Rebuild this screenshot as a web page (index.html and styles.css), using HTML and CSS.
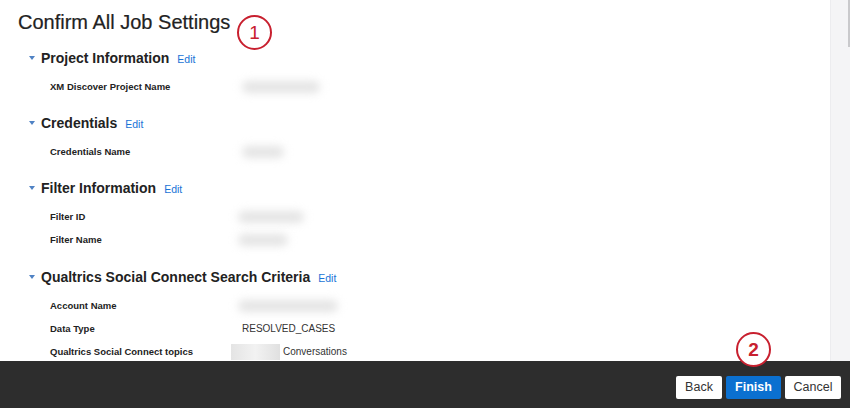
FILE: index.html
```html
<!DOCTYPE html>
<html lang="en">
<head>
    <meta charset="UTF-8">
    <title>Confirm All Job Settings</title>
    <link rel="stylesheet" href="styles.css">
</head>
<body>

    <div class="page">
        <div class="content">
            <h1 class="title">Confirm All Job Settings</h1>

            <div class="section">
                <div class="section-head">
                    <span class="caret"></span>
                    <h2>Project Information</h2>
                    <a href="#" class="edit">Edit</a>
                </div>
                <div class="rows">
                    <div class="row">
                        <span class="label">XM Discover Project Name</span>
                        <span class="blur w80"></span>
                    </div>
                </div>
            </div>

            <div class="section">
                <div class="section-head">
                    <span class="caret"></span>
                    <h2>Credentials</h2>
                    <a href="#" class="edit">Edit</a>
                </div>
                <div class="rows">
                    <div class="row">
                        <span class="label">Credentials Name</span>
                        <span class="blur w45"></span>
                    </div>
                </div>
            </div>

            <div class="section">
                <div class="section-head">
                    <span class="caret"></span>
                    <h2>Filter Information</h2>
                    <a href="#" class="edit">Edit</a>
                </div>
                <div class="rows">
                    <div class="row">
                        <span class="label">Filter ID</span>
                        <span class="blur w68 shift"></span>
                    </div>
                    <div class="row">
                        <span class="label">Filter Name</span>
                        <span class="blur w52 shift"></span>
                    </div>
                </div>
            </div>

            <div class="section last">
                <div class="section-head">
                    <span class="caret"></span>
                    <h2>Qualtrics Social Connect Search Criteria</h2>
                    <a href="#" class="edit">Edit</a>
                </div>
                <div class="rows">
                    <div class="row">
                        <span class="label">Account Name</span>
                        <span class="blur w100 shift"></span>
                    </div>
                    <div class="row">
                        <span class="label">Data Type</span>
                        <span class="value indent">RESOLVED_CASES</span>
                    </div>
                    <div class="row">
                        <span class="label">Qualtrics Social Connect topics</span>
                        <span class="value"><span class="mask"></span>Conversations</span>
                    </div>
                </div>
            </div>

            <span class="marker marker-one">1</span>
        </div>

        <div class="rail"><div class="thumb"></div></div>
    </div>

    <footer>
        <button class="btn">Back</button>
        <button class="btn btn-primary">Finish</button>
        <button class="btn">Cancel</button>
        <span class="marker marker-two">2</span>
    </footer>

</body>
</html>
```

FILE: styles.css
```css
body {
    margin: 0;
    font-family: "Liberation Sans", Arial, sans-serif;
    color: #2b2b2b;
    background-color: #fff;
    width: 850px;
    height: 408px;
    overflow: hidden;
    display: flex;
    flex-direction: column;
}
.page {
    height: 361px;
    display: flex;
    overflow: hidden;
}
.content {
    flex: 1;
    position: relative;
    padding: 7px 0 0 18px;
}
.title {
    margin: 0 0 11px 0;
    font-size: 20px;
    font-weight: normal;
    line-height: 30px;
    color: #222;
    -webkit-text-stroke: 0.2px #222;
}

/* cabeçalho de cada bloco */
.section-head {
    display: flex;
    align-items: center;
    height: 20px;
    padding-left: 11px;
}
.section.last {
    margin-top: 1px;
}
.caret {
    width: 0;
    height: 0;
    border-left: 3px solid transparent;
    border-right: 3px solid transparent;
    border-top: 4px solid #4f82c4;
    margin-right: 6px;
    margin-top: -1px;
}
.section-head h2 {
    margin: 0;
    font-size: 14px;
    font-weight: bold;
    color: #222;
}
.edit {
    margin-left: 8px;
    font-size: 10.5px;
    color: #1a73d6;
    text-decoration: none;
    margin-top: 2px;
}
.rows {
    padding: 7px 0 15px 32px;
}
.row {
    display: flex;
    align-items: center;
    height: 23px;
}
.label {
    width: 188px;
    font-size: 9.5px;
    font-weight: bold;
    color: #222;
}
.value {
    font-size: 10px;
    color: #333;
    display: flex;
    align-items: center;
}
.value.indent {
    margin-left: 4px;
}

/* valores ocultos */
.blur {
    height: 12px;
    background-color: #e4e4e4;
    border-radius: 6px;
    filter: blur(4px);
    margin-left: 4px;
}
.blur.shift {
    margin-left: 0;
}
.w45 { width: 42px; }
.w52 { width: 50px; }
.w68 { width: 66px; }
.w80 { width: 78px; }
.w100 { width: 100px; }
.mask {
    display: inline-block;
    width: 49px;
    height: 16px;
    margin-left: -7px;
    margin-right: 3px;
    background: linear-gradient(to right, #e4e4e4, #f2f2f2 50%, #e0e0e0);
}

/* barra de rolagem */
.rail {
    width: 19px;
    background-color: #f4f4f6;
    border-left: 1px solid #ececef;
    position: relative;
}
.thumb {
    position: absolute;
    right: 0;
    top: 0;
    width: 2px;
    height: 47px;
    background-color: #c9c9cc;
}

footer {
    flex: 1;
    background-color: #2d2d2d;
    display: flex;
    justify-content: flex-end;
    align-items: center;
    gap: 4px;
    padding: 5px 9px 0 0;
    position: relative;
}
.btn {
    height: 23px;
    padding: 0 6px;
    border: none;
    border-radius: 2px;
    background-color: #fff;
    color: #333;
    font-family: "Liberation Sans", Arial, sans-serif;
    font-size: 12.5px;
}
.btn:first-child {
    width: 46px;
}
.btn:nth-child(3) {
    width: 56px;
}
.btn-primary {
    width: 55px;
    background-color: #0b70d0;
    color: #fff;
    font-weight: bold;
    font-size: 12.5px;
}

/* marcadores numerados */
.marker {
    position: absolute;
    width: 31px;
    height: 31px;
    border: 2.5px solid #c8202f;
    border-radius: 50%;
    background-color: #fff;
    color: #c8202f;
    font-size: 19px;
    display: flex;
    align-items: center;
    justify-content: center;
}
.marker-one {
    left: 237px;
    top: 15px;
    background-color: transparent;
}
.marker-two {
    left: 736px;
    top: -29px;
    font-weight: bold;
}
```
